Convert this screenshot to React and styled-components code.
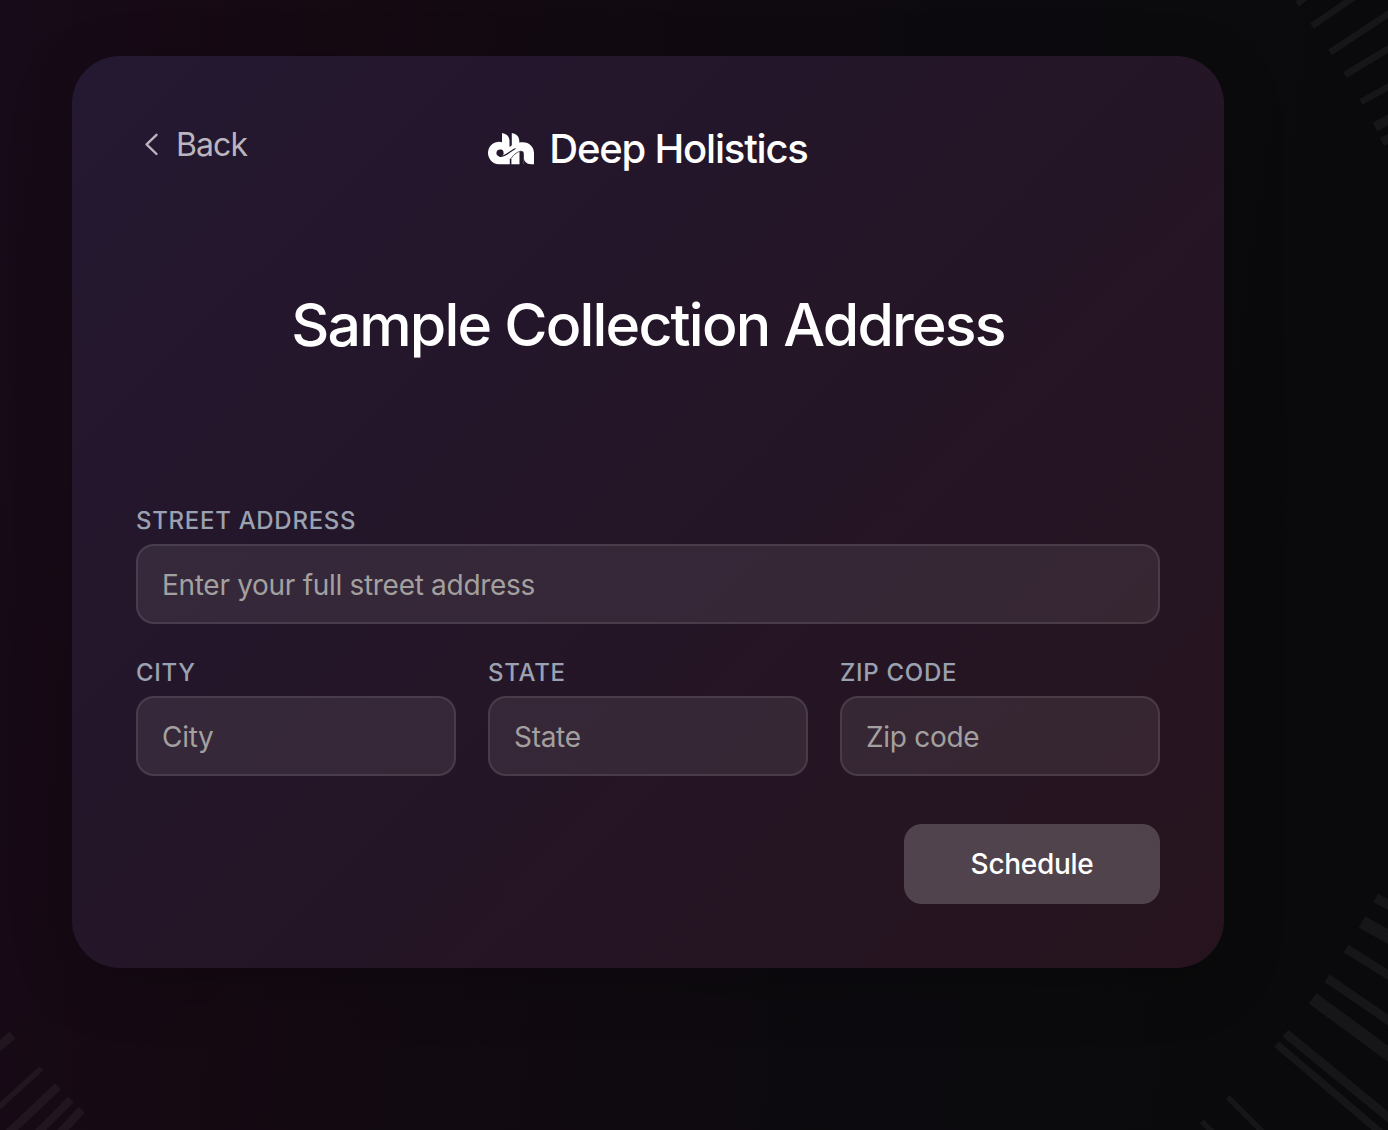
import React from "react";
import styled, { createGlobalStyle } from "styled-components";

const GlobalStyle = createGlobalStyle`
  *, *::before, *::after { box-sizing: border-box; }
  html, body { margin: 0; padding: 0; background: #08080a; }
  body { font-family: Inter, "Liberation Sans", sans-serif; overflow: hidden; }
`;

const Page = styled.main`
  position: relative;
  width: 1388px;
  height: 1130px;
  padding: 56px 72px;
  overflow: hidden;
  background: linear-gradient(98deg, #180b19 0%, #150912 22%, #100a10 44%, #0c0a0e 66%, #0a0a0c 88%, #0a0a0c 100%);
`;

const Rays = styled.svg`
  position: absolute;
  inset: 0;
  stroke: rgba(255, 255, 255, 0.05);
`;

const Card = styled.section`
  position: relative;
  display: flex;
  flex-direction: column;
  width: 1152px;
  height: 912px;
  padding: 64px;
  border-radius: 48px;
  background: linear-gradient(135deg, #241932 0%, #24162a 35%, #251524 68%, #26131d 100%);
  box-shadow: 0 16px 64px rgba(0, 0, 0, 0.2);
`;

const Header = styled.header`
  display: grid;
  grid-template-columns: 1fr auto 1fr;
  height: 60px;
`;

const BackButton = styled.button`
  display: flex;
  align-items: center;
  justify-self: start;
  gap: 17px;
  height: 50px;
  padding: 0 0 0 8px;
  border: 0;
  background: none;
  color: #bab5be;
  font: 400 32px/50px Inter, sans-serif;
  letter-spacing: -0.9px;
`;

const Brand = styled.div`
  display: flex;
  align-items: center;
  gap: 15px;
  height: 58px;
  color: #fff;
`;

const BrandName = styled.span`
  font-size: 40px;
  font-weight: 500;
  line-height: 58px;
  letter-spacing: -1.2px;
`;

const Title = styled.h1`
  margin: 109px 0 0;
  color: #fff;
  font-size: 59px;
  font-weight: 500;
  line-height: 72px;
  letter-spacing: -1.83px;
  text-align: center;
  white-space: nowrap;
`;

const Form = styled.form`
  display: grid;
  grid-template-columns: repeat(3, 1fr);
  column-gap: 32px;
  row-gap: 32px;
  margin-top: 143px;
`;

const Field = styled.label`
  display: flex;
  flex-direction: column;
  grid-column: ${({ $wide }) => ($wide ? "1 / -1" : "auto")};
`;

const Caption = styled.span`
  height: 40px;
  color: #9aa2b1;
  font-size: 24px;
  font-weight: 500;
  line-height: 34px;
  letter-spacing: 0.7px;
  text-transform: uppercase;
`;

const Input = styled.input`
  width: 100%;
  height: 80px;
  padding: 2px 24px 0;
  border: 2px solid rgba(255, 255, 255, 0.1);
  border-radius: 18px;
  background: rgba(255, 255, 255, 0.08);
  color: #fff;
  font: 400 28px Inter, sans-serif;
  letter-spacing: -0.3px;
  outline: 0;

  &::placeholder { color: #a3a09f; opacity: 1; }
`;

const SubmitButton = styled.button`
  grid-column: 3;
  justify-self: end;
  width: 256px;
  height: 80px;
  margin-top: 16px;
  padding: 0;
  border: 0;
  border-radius: 18px;
  background: rgba(255, 255, 255, 0.2);
  color: #fff;
  font: 500 28px Inter, sans-serif;
  letter-spacing: -0.3px;
`;

const rays = [
  [1297, 4, 1309, -5, 6],
  [1312, 26, 1350, 0, 6.5],
  [1330, 52.5, 1388, 14, 6.5],
  [1345, 75, 1388, 49, 7],
  [1361, 102, 1388, 87, 6.5],
  [1375, 127, 1388, 120, 9.5],
  [1382, 142, 1388, 139, 9],
  [1375.5, 898, 1388, 904.6, 9.5],
  [1362, 922, 1388, 936.5, 13],
  [1346, 948.7, 1388, 974.7, 9],
  [1327, 978.3, 1388, 1020, 9],
  [1312.5, 998.2, 1388, 1053.7, 13],
  [1285.5, 1033.2, 1388, 1117, 9],
  [1276.7, 1044.2, 1377.5, 1130, 7.5],
  [1227.7, 1097, 1260.7, 1130, 5.7],
  [1201.7, 1121.3, 1210.3, 1130, 5.5],
  [12.5, 1035.3, 0, 1045.5, 9],
  [41.5, 1068.3, 0, 1106, 5.5],
  [58, 1086.3, 13, 1129, 8.5],
  [71, 1099.3, 41.7, 1129, 8],
  [81.7, 1109.7, 64, 1129, 8.5],
];

// Each ray is carried past the window edge so that only its inner end is seen.
function BackgroundRays() {
  return (
    <Rays width="1388" height="1130" viewBox="0 0 1388 1130" aria-hidden="true">
      {rays.map(([x1, y1, x2, y2, w]) => (
        <line key={`${x1}-${y1}`} x1={x1} y1={y1} x2={x2 + (x2 - x1) * 2} y2={y2 + (y2 - y1) * 2} strokeWidth={w} />
      ))}
    </Rays>
  );
}

function Chevron() {
  return (
    <svg width="15" height="24" viewBox="0 0 15 24" fill="none" stroke="currentColor" strokeWidth="2.4" strokeLinecap="round" strokeLinejoin="round" aria-hidden="true">
      <path d="M12.5 1.8 2.6 11.3l9.9 9.7" />
    </svg>
  );
}

// Solid ribbon silhouette with the counter and the overlaps cut out of it.
function Logo() {
  return (
    <svg width="46" height="32" viewBox="0 0 46 32" fill="none" aria-hidden="true">
      <mask id="ribbon" maskUnits="userSpaceOnUse" x="0" y="0" width="46" height="32">
        <rect width="46" height="32" fill="#fff" />
        <path d="M14 16.8C10.5 15.8 8.4 17.8 8.4 20.1S10.5 24 12.6 23.6C14.5 23.2 15.6 22 15.6 20.2 15.6 18.6 15 17.3 14 16.8Z" fill="#000" />
        <path d="M11.5 23.5C17.5 24.3 21.5 18.2 27.5 15.4" stroke="#000" strokeWidth="1.1" />
        <path d="M23 25.5C25 22.5 28 19.2 33 18" stroke="#000" strokeWidth="0.7" />
        <path d="M31.5 19C33.5 17.3 35.8 18 35.8 21V32H31.5Z" fill="#000" />
        <path d="M21.8 25.6H23.4V32H21.8Z" fill="#000" />
      </mask>
      <path
        mask="url(#ribbon)"
        fill="currentColor"
        d="M14 0C18.6 .8 21.5 3.5 21.5 8V14L23.8 12.3V0C28.6 .8 31.3 3.5 31.3 8.2V9.6C39.5 7.5 46 12.8 46 20V31.2H43C38.5 31.2 35.8 28.5 35.8 24V31.2H10.8A10.8 11.2 0 1 1 14 9.3Z"
      />
    </svg>
  );
}

export default function App() {
  return (
    <>
      <GlobalStyle />
      <Page>
        <BackgroundRays />
        <Card>
          <Header>
            <BackButton type="button"><Chevron />Back</BackButton>
            <Brand><Logo /><BrandName>Deep Holistics</BrandName></Brand>
          </Header>
          <Title>Sample Collection Address</Title>
          <Form>
            <Field $wide>
              <Caption>Street Address</Caption>
              <Input placeholder="Enter your full street address" />
            </Field>
            <Field>
              <Caption>City</Caption>
              <Input placeholder="City" />
            </Field>
            <Field>
              <Caption>State</Caption>
              <Input placeholder="State" />
            </Field>
            <Field>
              <Caption>Zip Code</Caption>
              <Input placeholder="Zip code" />
            </Field>
            <SubmitButton type="button">Schedule</SubmitButton>
          </Form>
        </Card>
      </Page>
    </>
  );
}
